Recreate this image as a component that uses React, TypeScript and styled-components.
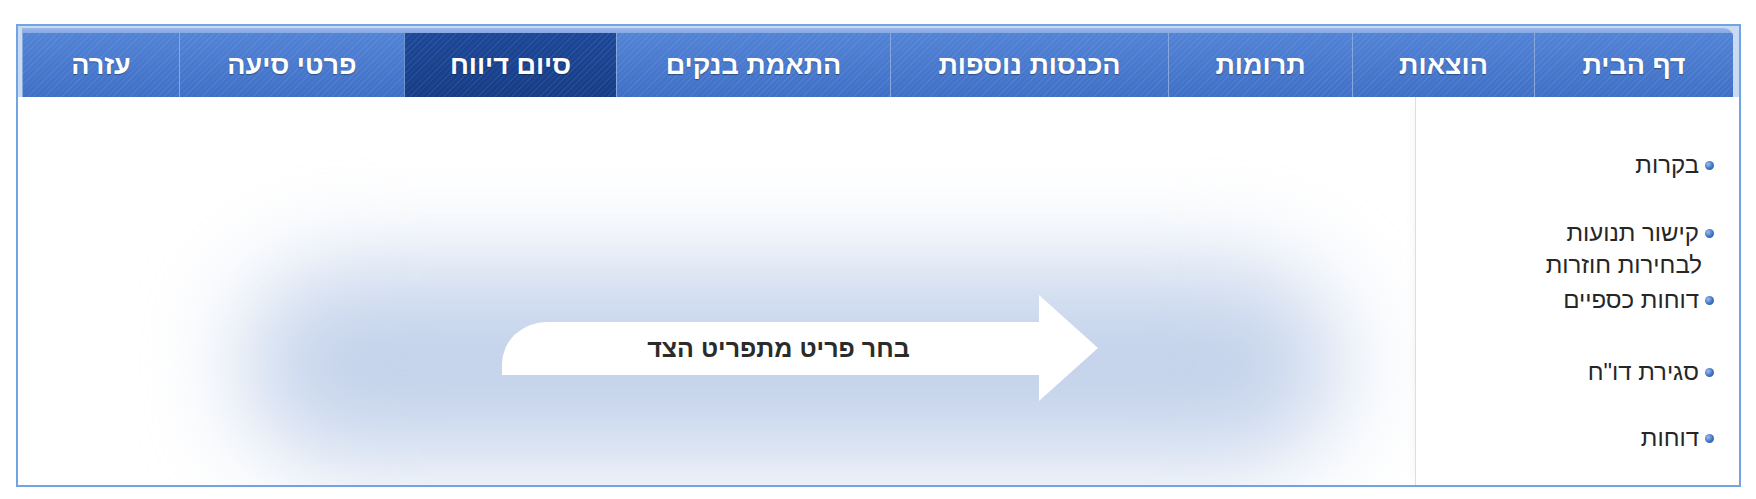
import React from "react";
import styled, { createGlobalStyle } from "styled-components";

const Global = createGlobalStyle`
  html, body { margin: 0; padding: 0; background: #ffffff; }
  body { font-family: "Liberation Sans", Arial, "DejaVu Sans", sans-serif; }
`;

const Frame = styled.div`
  direction: rtl;
  margin: 24px 15px 0 16px;
  border: 2px solid #72a3e2;
  background: #ffffff;
  display: flex;
  flex-direction: column;
`;

const NavWrap = styled.div`
  background: #c9daf3;
  padding: 2px 6px 0 4px;
`;

const Nav = styled.nav`
  display: flex;
  height: 69px;
  padding-top: 5px;
  box-sizing: border-box;
  border-top-right-radius: 9px;
  background: linear-gradient(to bottom, #9ab8e8 0px, #86a9e2 5px, #4a7bcf 5px, #4a7bcf 100%);
  overflow: hidden;
`;

const Tab = styled.div<{ $w?: number; $active?: boolean }>`
  box-sizing: border-box;
  ${(p) => (p.$w ? `width: ${p.$w}px; flex: none;` : `flex: 1;`)}
  height: 64px;
  display: flex;
  align-items: center;
  justify-content: center;
  border-left: 1px solid ${(p) => (p.$active ? "#6f94d2" : "#86a8df")};
  color: #ffffff;
  font-size: 27px;
  font-weight: bold;
  text-shadow: 0 1px 1px rgba(0, 0, 0, 0.35);
  background-image: repeating-linear-gradient(
      135deg,
      rgba(255, 255, 255, 0.07) 0px,
      rgba(255, 255, 255, 0.07) 1px,
      rgba(255, 255, 255, 0) 1px,
      rgba(255, 255, 255, 0) 4px
    ),
    ${(p) =>
      p.$active
        ? "linear-gradient(to bottom, #1d4898, #163d86)"
        : "linear-gradient(to bottom, #5283d5, #3f70c6)"};
`;

const Body = styled.div`
  display: flex;
  height: 388px;
`;

const Sidebar = styled.aside`
  width: 324px;
  box-sizing: border-box;
  border-left: 1px solid #dedede;
  box-shadow: -8px 0 10px -8px rgba(0, 0, 0, 0.06);
  padding: 0 25px 0 0;
  display: flex;
  flex-direction: column;
  align-items: flex-start;
`;

const Item = styled.div<{ $gap: number }>`
  display: flex;
  align-items: flex-start;
  gap: 6px;
  margin-top: ${(p) => p.$gap}px;
  font-size: 24px;
  line-height: 32px;
  color: #262626;
`;

const Bullet = styled.span`
  flex: none;
  width: 9px;
  height: 9px;
  margin-top: 12px;
  border-radius: 50%;
  background: radial-gradient(circle at 35% 35%, #9dbdeb 0%, #3f72c4 55%, #234f9a 100%);
`;

const ItemText = styled.span`
  white-space: nowrap;
`;

const ItemLine = styled.span<{ $shift?: boolean }>`
  display: block;
  margin-right: ${(p) => (p.$shift ? "-3px" : "0")};
`;

const Main = styled.main`
  flex: 1;
  position: relative;
  overflow: hidden;
  direction: ltr;
  display: flex;
  align-items: flex-start;
  padding: 198px 0 0 484px;
  &::before {
    content: "";
    position: absolute;
    left: 225px;
    top: 170px;
    width: 1095px;
    height: 195px;
    border-radius: 100px;
    background: #c4d3eb;
    filter: blur(50px);
  }
`;

const Arrow = styled.div`
  position: relative;
  z-index: 1;
  display: flex;
  align-items: center;
`;

const ArrowBody = styled.div`
  width: 537px;
  height: 53px;
  box-sizing: border-box;
  padding-left: 16px;
  background: #ffffff;
  border-top-left-radius: 45px 42px;
  display: flex;
  align-items: center;
  justify-content: center;
  direction: rtl;
  font-size: 25px;
  font-weight: bold;
  color: #2b2b2b;
`;

const ArrowHead = styled.div`
  width: 0;
  height: 0;
  border-left: 59px solid #ffffff;
  border-top: 53.5px solid transparent;
  border-bottom: 53.5px solid transparent;
`;

const tabs = [
  { label: "דף הבית", w: 199 },
  { label: "הוצאות", w: 182 },
  { label: "תרומות", w: 184 },
  { label: "הכנסות נוספות", w: 278 },
  { label: "התאמת בנקים", w: 274 },
  { label: "סיום דיווח", w: 212, active: true },
  { label: "פרטי סיעה", w: 225 },
  { label: "עזרה", w: 0 },
];

const items: { lines: string[]; gap: number }[] = [
  { lines: ["בקרות"], gap: 52 },
  { lines: ["קישור תנועות", "לבחירות חוזרות"], gap: 36 },
  { lines: ["דוחות כספיים"], gap: 3 },
  { lines: ['סגירת דו"ח'], gap: 40 },
  { lines: ["דוחות"], gap: 34 },
];

export default function App() {
  return (
    <>
      <Global />
      <Frame>
        <NavWrap>
          <Nav>
            {tabs.map((t) => (
              <Tab key={t.label} $w={t.w || undefined} $active={t.active}>
                {t.label}
              </Tab>
            ))}
          </Nav>
        </NavWrap>
        <Body>
          <Sidebar>
            {items.map((it, i) => (
              <Item key={i} $gap={it.gap}>
                <Bullet />
                <ItemText>
                  {it.lines.map((l, j) => (
                    <ItemLine key={j} $shift={j > 0}>
                      {l}
                    </ItemLine>
                  ))}
                </ItemText>
              </Item>
            ))}
          </Sidebar>
          <Main>
            <Arrow>
              <ArrowBody>בחר פריט מתפריט הצד</ArrowBody>
              <ArrowHead />
            </Arrow>
          </Main>
        </Body>
      </Frame>
    </>
  );
}
